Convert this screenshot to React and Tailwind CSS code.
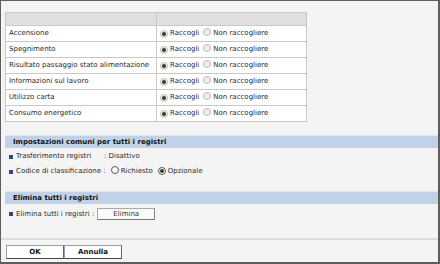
import React from "react";

function Radio({ checked, dark }) {
  return (
    <span
      className={
        "inline-flex items-center justify-center w-[8px] h-[8px] rounded-full border shrink-0 " +
        (dark ? "border-[#555] bg-white" : "border-[#bdbdbd] bg-[#ececec]")
      }
    >
      {checked && <span className="w-[4px] h-[4px] rounded-full bg-[#333]" />}
    </span>
  );
}

const rows = [
  "Accensione",
  "Spegnimento",
  "Risultato passaggio stato alimentazione",
  "Informazioni sul lavoro",
  "Utilizzo carta",
  "Consumo energetico",
];

function Bullet() {
  return <span className="w-[4px] h-[4px] bg-[#2c4a7c] shrink-0" />;
}

export default function App() {
  return (
    <div className="w-[440px] h-[264px] bg-[#f4f4f4] border-l border-t border-r-2 border-b-2 border-[#5e5e5e] flex flex-col font-['DejaVu_Sans',sans-serif] text-[7px] text-[#2a2a2a] overflow-hidden">
      {/* table */}
      <div className="ml-[4px] mt-[11px] w-[302px] border border-[#c8c8c8] flex flex-col">
        <div className="h-[12px] bg-[#e0e0e0] flex">
          <div className="w-[151px] border-r border-[#c8c8c8]" />
          <div className="flex-1" />
        </div>
        {rows.map((r) => (
          <div key={r} className="h-[16px] border-t border-[#c8c8c8] bg-white flex">
            <div className="w-[151px] border-r border-[#c8c8c8] flex items-center pl-[3px]">{r}</div>
            <div className="flex-1 flex items-center pl-[3px]">
              <Radio checked />
              <span className="ml-[2px]">Raccogli</span>
              <span className="ml-[4px]"><Radio /></span>
              <span className="ml-[2px]">Non raccogliere</span>
            </div>
          </div>
        ))}
      </div>

      {/* section 1 */}
      <div className="ml-[4px] mt-[13px] h-[13px] bg-[#c1d1e7] border-t border-[#dde6f2] flex items-center pl-[8px] font-bold text-[#111]">
        Impostazioni comuni per tutti i registri
      </div>
      <div className="mt-[1px] h-[15px] flex items-center pl-[8px]">
        <Bullet />
        <span className="ml-[3px] w-[88px]">Trasferimento registri</span>
        <span>: Disattivo</span>
      </div>
      <div className="h-[15px] flex items-center pl-[8px]">
        <Bullet />
        <span className="ml-[3px]">Codice di classificazione :</span>
        <span className="ml-[5px]"><Radio dark /></span>
        <span className="ml-[2px]">Richiesto</span>
        <span className="ml-[5px]"><Radio dark checked /></span>
        <span className="ml-[2px]">Opzionale</span>
      </div>

      {/* section 2 */}
      <div className="ml-[4px] mt-[12px] h-[13px] bg-[#c1d1e7] border-t border-[#dde6f2] flex items-center pl-[8px] font-bold text-[#111]">
        Elimina tutti i registri
      </div>
      <div className="mt-[3px] h-[14px] flex items-center pl-[8px]">
        <Bullet />
        <span className="ml-[3px]">Elimina tutti i registri :</span>
        <button className="ml-[3px] w-[58px] h-[12px] bg-[#fafafa] border border-[#a8a8a8] border-b-[#777] border-r-[#888] flex items-center justify-center text-[7px] text-[#333]">
          Elimina
        </button>
      </div>

      <div className="mt-[17px] h-[2px] bg-[#dcdcdc]" />

      <div className="mt-[5px] ml-[5px] flex">
        <button className="w-[58px] h-[14px] bg-white border border-[#9a9a9a] border-b-[#444] border-r-[#666] flex items-center justify-center font-bold text-[7px] text-[#111]">
          OK
        </button>
        <button className="w-[58px] h-[14px] bg-white border border-[#9a9a9a] border-b-[#444] border-r-[#666] flex items-center justify-center font-bold text-[7px] text-[#111]">
          Annulla
        </button>
      </div>
    </div>
  );
}
